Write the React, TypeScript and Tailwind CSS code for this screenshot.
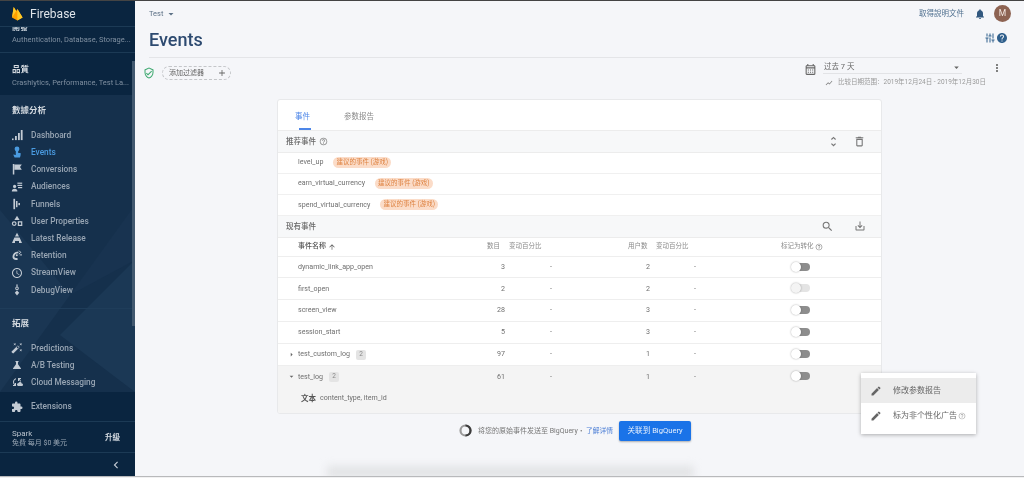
import React from "react";
import {
  MdAccessTime, MdAutoFixHigh, MdScience, MdCloudSync, MdExtension, MdChevronLeft, MdNotifications, MdHelp, MdHelpOutline,
  MdTune, MdArrowDropDown, MdMoreVert, MdOutlineDelete, MdUnfoldMore, MdSearch, MdSaveAlt, MdArrowUpward,
  MdArrowRight, MdEdit, MdAdd, MdOutlineVerifiedUser, MdOutlineCalendarMonth, MdShowChart,
} from "react-icons/md";

const cjk = "font-['Roboto','Noto_Sans_CJK_SC',sans-serif]";

type IP = { className?: string };
const Svg = ({ className, children }: IP & { children: React.ReactNode }) => (
  <svg viewBox="0 0 12 12" fill="currentColor" className={className}>{children}</svg>
);
const IcBars = (p: IP) => (
  <Svg {...p}>
    <rect x="1" y="9.5" width="1.6" height="1.6" /><rect x="4" y="7" width="1.8" height="4.1" />
    <rect x="7" y="4" width="1.8" height="7.1" /><rect x="9.8" y="1" width="1.8" height="10.1" />
  </Svg>
);
const IcEvents = (p: IP) => (
  <Svg {...p}>
    <circle cx="6" cy="3" r="2.4" />
    <path d="M4.8 5 H7.2 V7 H9.6 Q10 9 9 11.5 H3.6 L2.2 8.4 L4.8 9 Z" />
  </Svg>
);
const IcFlag = (p: IP) => (
  <Svg {...p}>
    <rect x="1.8" y="1" width="1.5" height="10.5" /><path d="M3.3 1.4 H10.8 L9 4 L10.8 6.8 H3.3 Z" />
  </Svg>
);
const IcAud = (p: IP) => (
  <Svg {...p}>
    <circle cx="3.6" cy="5.4" r="1.6" /><path d="M0.8 10.4 Q0.8 7.8 3.6 7.8 Q6.4 7.8 6.4 10.4 Z" />
    <rect x="6.4" y="1.6" width="4.8" height="1.2" /><rect x="6.4" y="3.8" width="4.8" height="1.2" /><rect x="7" y="6" width="4.2" height="1.2" />
  </Svg>
);
const IcFunnel = (p: IP) => (
  <Svg {...p}>
    <rect x="2.4" y="0.8" width="1.7" height="10.4" /><rect x="5" y="3" width="1.5" height="6.2" /><rect x="7.4" y="5" width="1.6" height="2.2" />
  </Svg>
);
const IcProps = (p: IP) => (
  <Svg {...p}>
    <path d="M6 0.8 L8.6 5 H3.4 Z" />
    <path fillRule="evenodd" d="M3.2 6.2 A2.4 2.4 0 1 1 3.2 11 A2.4 2.4 0 1 1 3.2 6.2 Z M3.2 7.4 A1.2 1.2 0 1 0 3.2 9.8 A1.2 1.2 0 1 0 3.2 7.4 Z" />
    <path fillRule="evenodd" d="M6.8 6.3 H11.3 V10.9 H6.8 Z M8 7.5 V9.7 H10.1 V7.5 Z" />
  </Svg>
);
const IcRelease = (p: IP) => (
  <Svg {...p}>
    <path d="M6 0.8 L8 4.6 H4 Z" /><path d="M3.4 5.4 H8.6 L11 11 H8 V9 H4 V11 H1 Z" />
  </Svg>
);
const IcRetention = (p: IP) => (
  <svg viewBox="0 0 12 12" fill="none" stroke="currentColor" className={p.className}>
    <path d="M7.4 3.4 Q2.6 3.6 2.4 8 Q3 10.6 6.6 9.8" strokeWidth="1.8" />
    <circle cx="5.8" cy="6.2" r="1" fill="currentColor" stroke="none" />
    <rect x="8.6" y="5.4" width="2.4" height="1" fill="currentColor" stroke="none" />
    <path d="M8 1.6 L9.8 3.4 L7.8 5" strokeWidth="1" />
  </svg>
);
const IcDebug = (p: IP) => (
  <Svg {...p}>
    <rect x="5.4" y="0.4" width="1.2" height="2.4" />
    <path fillRule="evenodd" d="M6 2.6 A1.8 1.8 0 1 1 6 6.2 A1.8 1.8 0 1 1 6 2.6 Z M6 3.6 A0.8 0.8 0 1 0 6 5.2 A0.8 0.8 0 1 0 6 3.6 Z" />
    <path d="M6 6.4 L8.2 8.8 L6 11.6 L3.8 8.8 Z" />
  </Svg>
);

function Nav({ icon: I, label, active }: { icon: any; label: string; active?: boolean }) {
  return (
    <div className={`flex h-[17.2px] items-center pl-[11px] text-[8.3px] font-medium ${active ? "text-[#4a9be0]" : "text-[#99a6b4]"}`}>
      <I className={`h-[12px] w-[12px] shrink-0 ${active ? "text-[#4a9be0]" : "text-[#c3cbd4]"}`} />
      <span className="ml-[8px] whitespace-nowrap">{label}</span>
    </div>
  );
}

function Sidebar() {
  return (
    <aside className="relative flex h-full w-[135px] shrink-0 flex-col overflow-hidden bg-[#0a2540]">
      <div className="relative z-10 flex h-[26px] shrink-0 items-center border-b border-[#1c3a55] bg-[#0a2540] pl-[12px]">
        <svg width="11" height="15" viewBox="0 0 11 15" className="-mt-[1px]">
          <path d="M0 11.5 L1.7 1 L4.2 5 L5.4 3 L10.6 11.5 L5.4 14.6 Z" fill="#ffa000" />
          <path d="M5.4 3 L10.6 11.5 L5.4 14.6 Z" fill="#ffca28" />
          <path d="M1.7 1 L4.2 5 L0 11.5 Z" fill="#ffca28" />
        </svg>
        <span className="ml-[7px] text-[12px] text-[#dfe4e9]">Firebase</span>
      </div>
      <div className="-mt-[2px] h-[28px] shrink-0 border-b border-[#1c3a55] pl-[12px]">
        <div className="h-[6px] overflow-hidden text-[8px] font-bold leading-[5px] text-[#c8d0d8]">開發</div>
        <div className="mt-[2px] whitespace-nowrap text-[7.5px] leading-[14px] text-[#7f8fa0]">Authentication, Database, Storage...</div>
      </div>
      <div className="h-[42px] shrink-0 pl-[12px] pt-[10px]">
        <div className="text-[8.5px] font-bold leading-[12px] text-[#d4dae0]">品質</div>
        <div className="mt-[3px] whitespace-nowrap text-[7.5px] leading-[10px] text-[#7f8fa0]">Crashlytics, Performance, Test La...</div>
      </div>
      <div className="relative h-[297px] shrink-0 overflow-hidden bg-[#15304c]">
        <svg className="absolute inset-0" width="135" height="297" viewBox="0 0 135 297">
          <path d="M0 115 L70 200 L0 297 Z" fill="#1a3653" />
          <path d="M135 165 L60 240 L135 297 Z" fill="#1b3855" />
          <path d="M70 200 L135 165 L135 110 Z" fill="#183350" />
        </svg>
        <div className="relative">
          <div className="pl-[12px] pt-[9px] text-[8.5px] font-bold leading-[12px] text-[#d4dae0]">數據分析</div>
          <div className="mt-[10.5px]">
            <Nav icon={IcBars} label="Dashboard" />
            <Nav icon={IcEvents} label="Events" active />
            <Nav icon={IcFlag} label="Conversions" />
            <Nav icon={IcAud} label="Audiences" />
            <Nav icon={IcFunnel} label="Funnels" />
            <Nav icon={IcProps} label="User Properties" />
            <Nav icon={IcRelease} label="Latest Release" />
            <Nav icon={IcRetention} label="Retention" />
            <Nav icon={MdAccessTime} label="StreamView" />
            <Nav icon={IcDebug} label="DebugView" />
          </div>
          <div className="mt-[10px] border-t border-[#1f3d5a] pl-[12px] pt-[8px] text-[8.5px] font-bold leading-[12px] text-[#d4dae0]">拓展</div>
          <div className="mt-[10px]">
            <Nav icon={MdAutoFixHigh} label="Predictions" />
            <Nav icon={MdScience} label="A/B Testing" />
            <Nav icon={MdCloudSync} label="Cloud Messaging" />
          </div>
        </div>
      </div>
      <div className="flex h-[30px] shrink-0 items-center border-b border-[#1c3a55]">
        <Nav icon={MdExtension} label="Extensions" />
      </div>
      <div className="flex h-[31px] shrink-0 items-center justify-between border-b border-[#1c3a55] pl-[12px] pr-[15px] pt-[2px]">
        <div>
          <div className="text-[8px] leading-[9px] text-[#b7c1cb]">Spark</div>
          <div className="text-[7px] leading-[10px] text-[#9aa7b4]">免費 每月 $0 美元</div>
        </div>
        <span className="text-[7.5px] font-bold text-[#d4dae0]">升級</span>
      </div>
      <div className="flex flex-1 items-start justify-end pr-[12px] pt-[5px]">
        <MdChevronLeft className="h-[14px] w-[14px] text-[#c3cbd4]" />
      </div>
      <div className="absolute right-0 top-[60px] h-[265px] w-[3px] bg-[#41586f]" />
    </aside>
  );
}

function Toggle({ faint }: { faint?: boolean }) {
  return (
    <div className="relative -mt-[1px] h-[10px] w-[19px]">
      <div className={`absolute right-0 top-[1px] h-[8px] w-[14px] rounded-full ${faint ? "bg-[#e4e4e4]" : "bg-[#8d8d8d]"}`} />
      <div className={`absolute left-0 top-0 h-[10px] w-[10px] rounded-full shadow-[0_0_2px_rgba(0,0,0,0.35)] ${faint ? "bg-[#f4f4f4]" : "bg-white"}`} />
    </div>
  );
}

const cols = "grid grid-cols-[212px_15px_50px_95px_46px_1fr] items-center";

function Row({ name, count, users, faint, tag, open, arrow, shade }: { name: string; count: string; users: string; faint?: boolean; tag?: string; open?: boolean; arrow?: boolean; shade?: boolean }) {
  return (
    <div className={`${cols} h-[21.9px] border-b border-[#eeeeee] text-[7.1px] text-[#6f6f6f] ${shade ? "border-b-0 bg-[#f4f4f4]" : ""}`}>
      <div className="relative flex items-center pl-[20px]">
        {arrow && <MdArrowRight className={`absolute left-[9px] h-[9px] w-[9px] text-[#666] ${open ? "rotate-90" : ""}`} />}
        <span className="whitespace-nowrap">{name}</span>
        {tag && <span className="ml-[6px] flex h-[10px] w-[10px] items-center justify-center rounded-[2px] bg-[#e4e4e4] text-[6.5px] text-[#888]">{tag}</span>}
      </div>
      <div className="text-right">{count}</div>
      <div className="pr-[3px] text-right">-</div>
      <div className="text-right">{users}</div>
      <div className="text-right">-</div>
      <div className="pl-[95px]"><Toggle faint={faint} /></div>
    </div>
  );
}

function Suggest({ name }: { name: string }) {
  return (
    <div className="flex h-[21.2px] items-center border-b border-[#f0f0f0] pl-[20px] text-[7.1px] text-[#6f6f6f]">
      <span className="whitespace-nowrap">{name}</span>
      <span className="ml-[10px] flex h-[11px] items-center rounded-full bg-[#fbdcc8] px-[3px] text-[6.5px] text-[#de8240]">建议的事件 (游戏)</span>
    </div>
  );
}

function SectionHead({ title, help, gap, children }: { title: string; help?: boolean; gap: string; children: React.ReactNode }) {
  return (
    <div className="flex h-[21.5px] items-center justify-between border-b border-[#ececec] bg-[#f7f8f9] pl-[8px] pr-[15px]">
      <div className="flex items-center text-[7.5px] font-medium text-[#666]">
        {title}
        {help && <MdHelpOutline className="ml-[3px] h-[9px] w-[9px] text-[#888]" />}
      </div>
      <div className={`flex items-center text-[#777] ${gap}`}>{children}</div>
    </div>
  );
}

function Card() {
  return (
    <section className="ml-[142px] mt-[6px] w-[605px] overflow-hidden rounded-[3px] border border-[#e8e9eb] bg-white">
      <div className="flex h-[31px] items-end border-b border-[#ececec] pl-[17px] text-[7.5px]">
        <div className="relative flex h-[31px] items-center pt-[5px] text-[#4d86e8]">
          事件
          <div className="absolute bottom-0 left-[4px] h-[2px] w-[12px] bg-[#4d86e8]" />
        </div>
        <div className="ml-[34px] flex h-[31px] items-center pt-[5px] text-[#8a8a8a]">参数报告</div>
      </div>
      <SectionHead title="推荐事件" help gap="gap-[13px]">
        <MdUnfoldMore className="h-[13px] w-[13px]" />
        <MdOutlineDelete className="h-[13px] w-[13px]" />
      </SectionHead>
      <Suggest name="level_up" />
      <Suggest name="earn_virtual_currency" />
      <Suggest name="spend_virtual_currency" />
      <SectionHead title="现有事件" gap="gap-[20px]">
        <MdSearch className="h-[13px] w-[13px]" />
        <MdSaveAlt className="h-[12px] w-[12px]" />
      </SectionHead>
      <div className="flex h-[19px] items-center whitespace-nowrap border-b border-[#eeeeee] text-[6.5px] text-[#8a8a8a]">
        <div className="ml-[20px] flex w-[189px] items-center text-[7px] font-medium text-[#555]">
          事件名称<MdArrowUpward className="ml-[2px] h-[8px] w-[8px]" />
        </div>
        <div className="w-[13px] text-right">数目</div>
        <div className="ml-[9px] w-[80px]">变动百分比</div>
        <div className="ml-[39px] w-[20px]">用户数</div>
        <div className="ml-[8px] w-[32px]">变动百分比</div>
        <div className="ml-[93px] flex items-center">标记为转化<MdHelpOutline className="ml-[1px] h-[8px] w-[8px]" /></div>
      </div>
      <Row name="dynamic_link_app_open" count="3" users="2" />
      <Row name="first_open" count="2" users="2" faint />
      <Row name="screen_view" count="28" users="3" />
      <Row name="session_start" count="5" users="3" />
      <Row name="test_custom_log" count="97" users="1" tag="2" arrow />
      <Row name="test_log" count="61" users="1" tag="2" arrow open shade />
      <div className="flex h-[25px] items-start bg-[#f4f4f4] pl-[23px] pt-[5px] text-[7.1px] text-[#6f6f6f]">
        <span className="mr-[4px] text-[7.5px] font-bold text-[#555]">文本</span>content_type, item_id
      </div>
    </section>
  );
}

function Main() {
  return (
    <main className="relative min-w-0 flex-1 bg-[#f5f6f9]">
      <header className="flex h-[26px] items-center justify-between pl-[14px] pr-[13px]">
        <div className="flex items-center text-[7.5px] text-[#5d7186]">Test<MdArrowDropDown className="ml-[2px] h-[12px] w-[12px]" /></div>
        <div className="flex items-center">
          <span className="text-[7.5px] text-[#4f6f8f]">取得說明文件</span>
          <MdNotifications className="ml-[10px] h-[12px] w-[12px] text-[#32587f]" />
          <div className="-mt-[2px] ml-[8px] flex h-[17px] w-[17px] items-center justify-center rounded-full bg-[#8d6352] text-[8.5px] text-[#f3e8e2]">M</div>
        </div>
      </header>
      <div className="mx-[14px] flex h-[31px] items-center justify-between border-b border-[#e4e5e8]">
        <h1 className="-mt-[6px] text-[18px] font-medium text-[#2d4a70]">Events</h1>
        <div className="-mt-[8px] flex items-center pr-[2px] text-[#2f5f8c]">
          <MdTune className="h-[12px] w-[12px] rotate-90" />
          <MdHelp className="h-[12px] w-[12px]" />
        </div>
      </div>
      <div className="flex h-[35px] items-start pl-[8px] pr-[21px]">
        <MdOutlineVerifiedUser className="mt-[9px] h-[12px] w-[12px] text-[#3aa76d]" />
        <div className="ml-[7px] mt-[8px] flex h-[13.5px] w-[69px] items-center justify-between rounded-full border border-dashed border-[#c4c6c9] pl-[6px] pr-[3px] text-[7px] text-[#666]">
          添加过滤器<MdAdd className="h-[10px] w-[10px]" />
        </div>
        <div className="ml-auto mt-[3px] flex">
          <MdOutlineCalendarMonth className="mt-[2px] h-[13px] w-[13px] text-[#666]" />
          <div className="ml-[6px] w-[166px]">
            <div className="flex h-[13px] w-[139px] items-center justify-between border-b border-[#e2e3e6] pl-[1px] text-[7.5px] text-[#666]">
              过去 7 天<MdArrowDropDown className="h-[11px] w-[11px] text-[#666]" />
            </div>
            <div className="mt-[4px] flex items-center whitespace-nowrap pl-[2px] text-[6.5px] text-[#999]">
              <MdShowChart className="mr-[5px] h-[8px] w-[8px] text-[#777]" />比较日期范围：2019年12月24日 - 2019年12月30日
            </div>
          </div>
          <MdMoreVert className="ml-[2px] mt-[1px] h-[12px] w-[12px] text-[#666]" />
        </div>
      </div>
      <Card />
      <div className="ml-[324px] mt-[7px] flex items-center text-[7px] text-[#777]">
        <svg width="13" height="13" viewBox="0 0 13 13" className="shrink-0">
          <circle cx="6.5" cy="6.5" r="5" fill="none" stroke="#9a9a9a" strokeWidth="2.2" />
          <path d="M6.5 1.5 A5 5 0 0 1 6.5 11.5" fill="none" stroke="#3c3c3c" strokeWidth="2.2" />
        </svg>
        <span className="ml-[6px] whitespace-nowrap">将您的原始事件发送至 BigQuery・</span>
        <span className="ml-[1px] whitespace-nowrap text-[6.8px] text-[#4d7fd6]">了解详情</span>
        <button className="ml-[6px] flex h-[20px] w-[72px] items-center justify-center rounded-[2px] bg-[#1a73e8] text-[7.6px] text-[#e6f0fd] shadow-[0_1px_2px_rgba(0,0,0,0.3)]">关联到 BigQuery</button>
      </div>
      <div className="absolute left-[726px] top-[372px] w-[115px] bg-white pb-[5px] pt-[5px] text-[8px] text-[#666] shadow-[0_1px_4px_rgba(0,0,0,0.3)]">
        <div className="flex h-[25px] items-center bg-[#ececec] pl-[9px]">
          <MdEdit className="h-[12px] w-[12px] text-[#666]" /><span className="ml-[11px]">修改参数报告</span>
        </div>
        <div className="flex h-[26px] items-center pl-[9px]">
          <MdEdit className="h-[12px] w-[12px] text-[#666]" /><span className="ml-[11px]">标为非个性化广告</span>
          <MdHelpOutline className="ml-[1px] h-[8px] w-[8px] text-[#aaa]" />
        </div>
      </div>
      <div className="absolute -bottom-[2px] left-[192px] h-[12px] w-[367px] bg-[#e2e3e5] blur-[4px]" />
    </main>
  );
}

export default function App() {
  return (
    <div className={`flex h-[478px] w-[1024px] flex-col overflow-hidden ${cjk} blur-[0.5px]`}>
      <div className="h-[1px] shrink-0 bg-[#444]" />
      <div className="flex min-h-0 flex-1 overflow-hidden">
        <Sidebar />
        <Main />
      </div>
      <div className="h-[2px] shrink-0 border-t border-[#b8b9bb] bg-[#f1f1f2]" />
    </div>
  );
}
